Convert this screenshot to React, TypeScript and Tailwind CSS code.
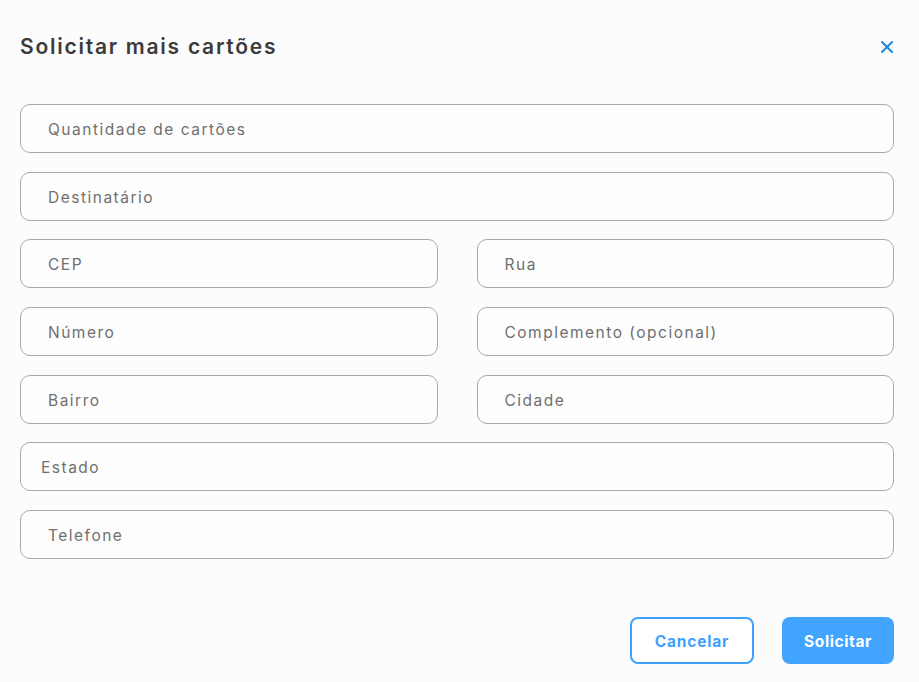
import React from "react";

const font = { fontFamily: "Inter, 'Open Sans', sans-serif" };

function Field({ label, pl = "pl-[27px]" }: { label: string; pl?: string }) {
  return (
    <div
      className={`h-[49px] w-full rounded-[10px] border border-[#a9a9a9] bg-[#fdfdfd] flex items-center ${pl} pt-[2px] text-[15.5px] tracking-[1.5px] text-[#6f6f6f]`}
    >
      {label}
    </div>
  );
}

export default function App() {
  return (
    <div className="w-[919px] h-[682px] bg-[#fcfcfc] pl-[20px] pr-[25px] pt-[33px]" style={font}>
      <div className="flex items-center justify-between h-[28px]">
        <h1 className="text-[21px] font-semibold tracking-[1.75px] text-[#3b3b3b]">Solicitar mais cartões</h1>
        <svg width="12" height="12" viewBox="0 0 12 12" className="mr-[1px]">
          <path d="M1 1 L11 11 M11 1 L1 11" stroke="#1d87e4" strokeWidth="2" strokeLinecap="square" />
        </svg>
      </div>
      <div className="mt-[43px] flex flex-col gap-[18.7px]">
        <Field label="Quantidade de cartões" />
        <Field label="Destinatário" />
        <div className="grid grid-cols-2 gap-x-[39px]">
          <Field label="CEP" />
          <Field label="Rua" />
        </div>
        <div className="grid grid-cols-2 gap-x-[39px]">
          <Field label="Número" />
          <Field label="Complemento (opcional)" />
        </div>
        <div className="grid grid-cols-2 gap-x-[39px]">
          <Field label="Bairro" />
          <Field label="Cidade" />
        </div>
        <Field label="Estado" pl="pl-[20px]" />
        <Field label="Telefone" />
      </div>
      <div className="mt-[58px] flex justify-end gap-[28px]">
        <button className="w-[124px] h-[47px] rounded-[8px] border-2 border-[#3fa0fd] text-[#3f9ffc] text-[15.5px] font-bold tracking-[0.8px] bg-white pt-[1px]">
          Cancelar
        </button>
        <button className="w-[112px] h-[47px] rounded-[8px] bg-[#41a4ff] text-white text-[15.5px] font-bold tracking-[0.6px] pt-[1px]">
          Solicitar
        </button>
      </div>
    </div>
  );
}
